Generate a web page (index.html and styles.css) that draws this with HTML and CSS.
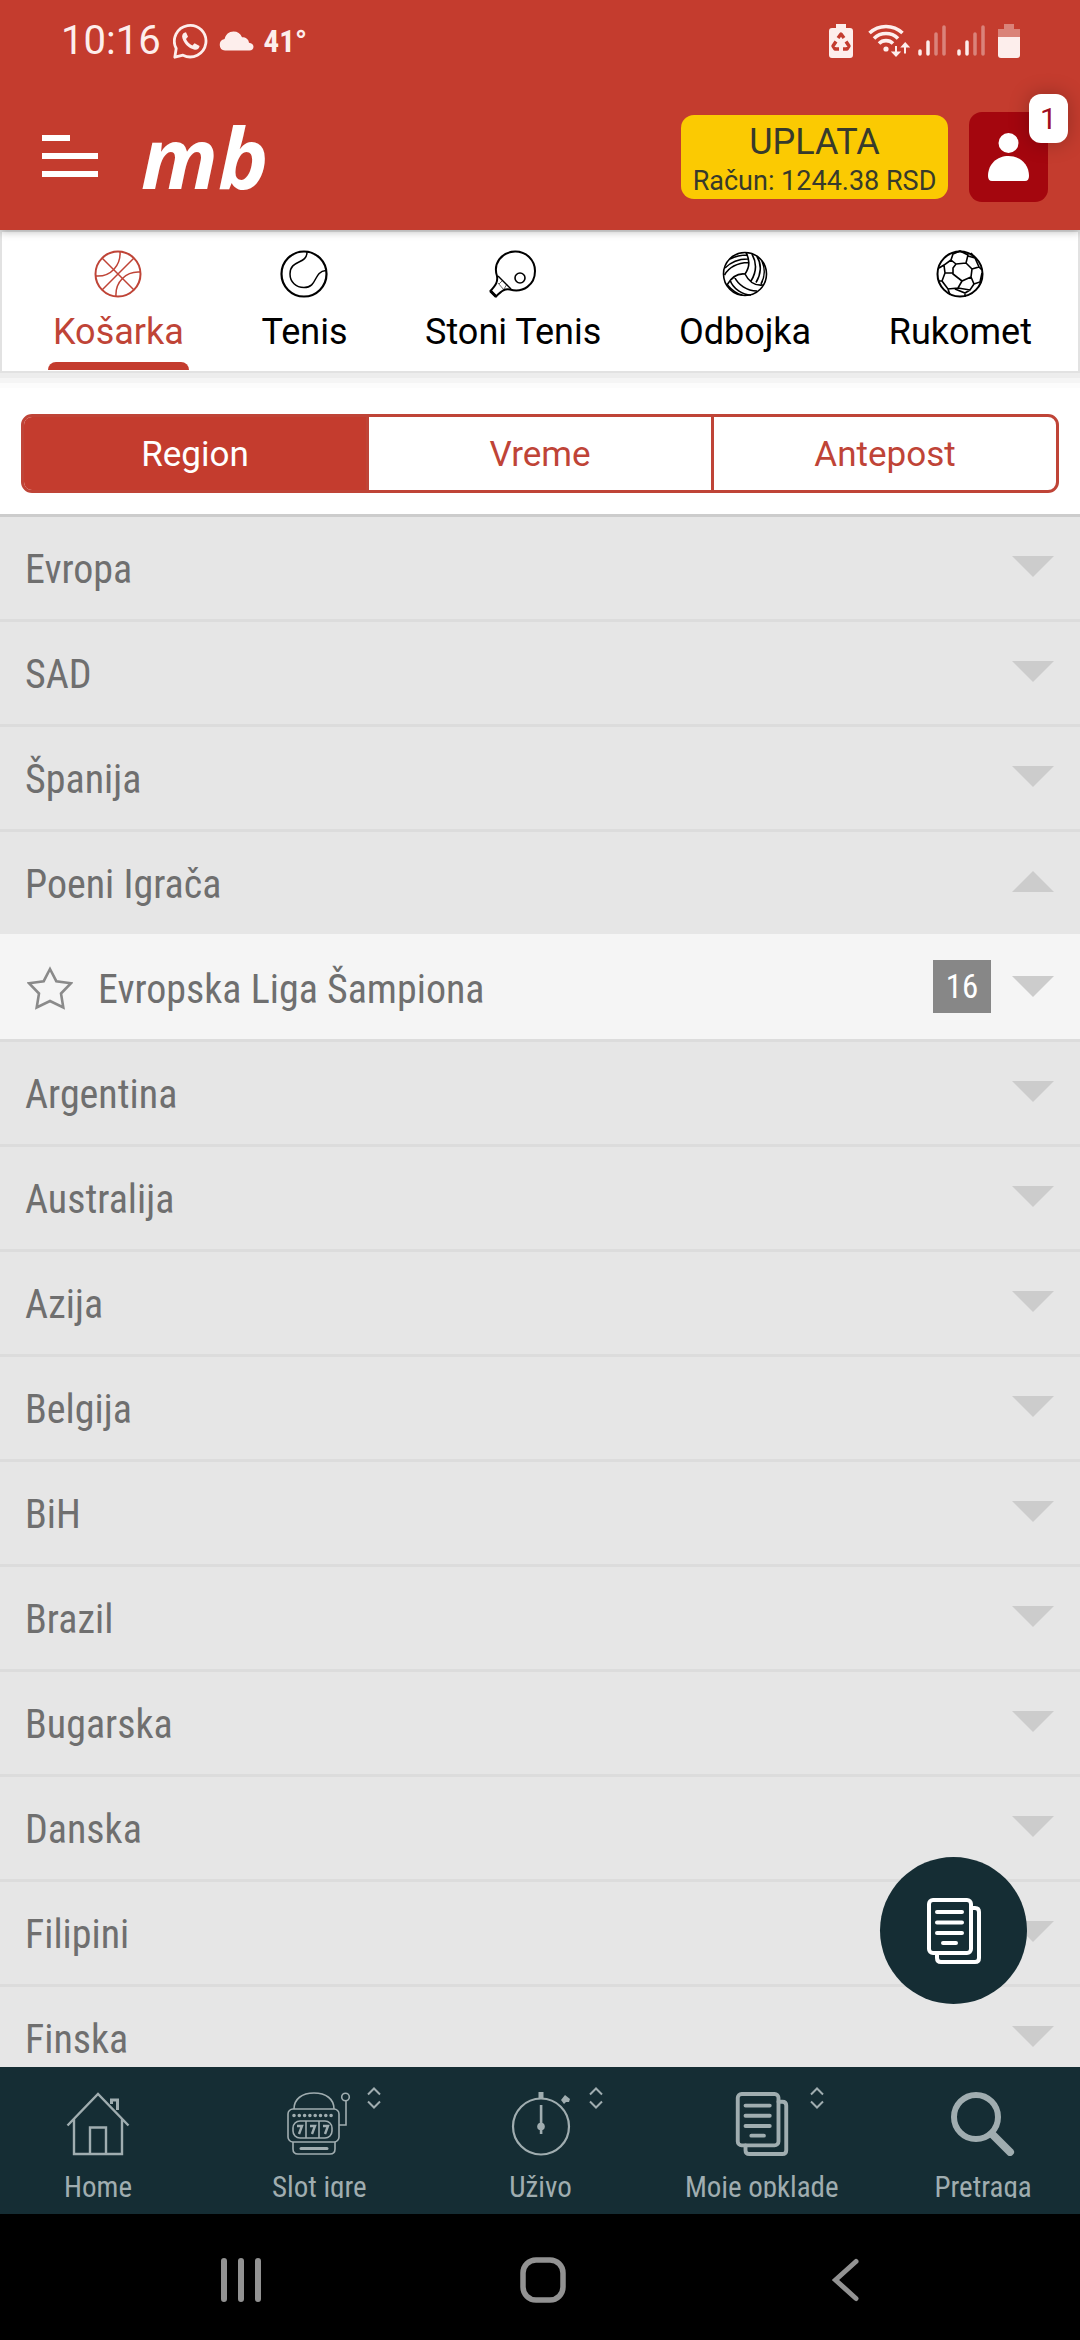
FILE: index.html
```html
<!DOCTYPE html>
<html lang="sr-Latn">
<head>
<meta charset="utf-8">
<meta name="viewport" content="width=device-width, initial-scale=1">
<title>Košarka</title>
<link rel="stylesheet" href="styles.css">
</head>
<body>
<svg class="defs" aria-hidden="true">
  <symbol id="down" viewBox="0 0 42 21"><path d="M0 0h42L21 21z" fill="currentColor"/></symbol>
  <symbol id="up" viewBox="0 0 42 21"><path d="M0 21h42L21 0z" fill="currentColor"/></symbol>
  <symbol id="sort" viewBox="0 0 14 22"><path d="M1 7.500L7 1.500l6 6M1 14.500l6 6 6-6" fill="none" stroke="currentColor" stroke-width="2"/></symbol>
  <symbol id="signal" viewBox="0 0 28 32"><g stroke="currentColor" stroke-width="3.500" stroke-linecap="round"><path d="M2 26v3M10 17v12"/><path d="M18 9v20M26 2v27" opacity=".4"/></g></symbol>
  <symbol id="slips" viewBox="0 0 54 66"><g fill="none" stroke="currentColor" stroke-width="4" stroke-linecap="round"><rect x="2" y="2" width="42" height="53" rx="4"/><path d="M44 10h4q4 0 4 4v46q0 4-4 4H14q-4 0-4-4v-5M10 14h25M10 24.500h25M10 35h25M16 45h13"/></g></symbol>
</svg>

<header class="header">
  <div class="status">
    <span class="clock">10:16</span>
    <svg width="36" height="36" viewBox="0 0 36 36"><path d="M3.200 25.500A15.800 15.800 0 1 1 10 32.200L1.800 34.200z" fill="none" stroke="currentColor" stroke-width="2.800" stroke-linejoin="round"/><path d="M12 9.500c-2.500.7-3.500 3-2.500 6 1.800 5.500 6 9.500 11.500 11 3 .8 5.200-.8 5.600-3.600l-5-2.700-2.200 2.200c-3-1.200-5.200-3.500-6.400-6.400l2-2.200-2-4.500z" fill="currentColor"/></svg>
    <svg class="cloud" width="35" height="20" viewBox="0 0 35 20"><path d="M6 19.500a5.800 5.800 0 0 1-.4-11.500C6.500 3.500 10 .5 14.500.5c4 0 7 2 8.500 5.800 4 0 6.500 2 7 5.400 2.600.3 4.500 1.600 4.500 4 0 2.300-1.600 3.800-4 3.800z" fill="currentColor"/></svg>
    <span class="temp">41°</span>
    <span class="status-right">
      <svg width="24" height="34" viewBox="0 0 24 34"><path d="M7 0h10v4h4q3 0 3 3v24q0 3-3 3H3q-3 0-3-3V7q0-3 3-3h4z" fill="currentColor"/><path d="M9 14l3-4 3 4M17 17.500l3 4.500-2 3h-4M10 25H6l-2-3 3-4.500" fill="none" stroke="#c33c2f" stroke-width="3.400" stroke-linejoin="round"/><path d="M12 15l3.500 5h-2v4h-3v-4h-2z" fill="#fdeeec"/></svg>
      <svg class="wifi" width="42" height="34" viewBox="0 0 42 34"><g fill="none" stroke="currentColor" stroke-width="3.600"><path d="M1.500 9a24 24 0 0 1 33 0M6 14.500a17 17 0 0 1 24 0M11 19.500a10 10 0 0 1 14 0"/></g><circle cx="18" cy="25" r="2.600" fill="currentColor"/><path d="M27 22v5.500h-4.200l5.200 5.500 5.200-5.500H29V22zM36 29.500v-6h-3.800l5-5.500 5 5.500H38v6z" fill="currentColor"/></svg>
      <svg width="28" height="32"><use href="#signal"/></svg>
      <svg class="signal-two" width="28" height="32"><use href="#signal"/></svg>
      <svg width="22" height="34" viewBox="0 0 22 34"><path d="M6 0h10v5h6v8H0V5h6z" fill="currentColor" opacity=".4"/><path d="M0 13h22v18q0 3-3 3H3q-3 0-3-3z" fill="currentColor"/></svg>
    </span>
  </div>
  <div class="topbar">
    <button class="menu" aria-label="Meni"><svg width="56" height="42" viewBox="0 0 56 42"><path d="M0 0h28v6H0zM0 18h56v6H0zM0 36h56v6H0z" fill="currentColor"/></svg></button>
    <a class="logo" href="#">mb</a>
    <button class="pay"><span class="pay-title">UPLATA</span><span class="pay-sum">Račun: 1244.38 RSD</span></button>
    <button class="user" aria-label="Nalog"><svg width="41" height="48" viewBox="0 0 41 48"><circle cx="20.500" cy="10" r="10" fill="currentColor"/><path d="M0 43C0 31 9 23 20.500 23S41 31 41 43q0 5-4 5H4q-4 0-4-5z" fill="currentColor"/></svg><span class="badge">1</span></button>
  </div>
</header>

<nav class="sports">
  <a class="sport active" href="#"><svg width="48" height="48" viewBox="0 0 48 48"><g fill="none" stroke="currentColor" stroke-width="1.500"><circle cx="24" cy="24" r="22.500" stroke-width="2"/><path d="M8 8l32 32M40 8L8 40M26 1.500C27 15 17 27 2 26M46 22C32 21 21 32 22 46.500"/></g></svg><span>Košarka</span></a>
  <a class="sport" href="#"><svg width="48" height="48" viewBox="0 0 48 48"><g fill="none" stroke="currentColor" stroke-width="1.500"><circle cx="24" cy="24" r="22.500" stroke-width="2.200"/><path d="M27 2C27 15 10 9 10 24c0 8 6 13.500 14 13.500 14 0 9-16 22-17"/></g></svg><span>Tenis</span></a>
  <a class="sport" href="#"><svg width="48" height="48" viewBox="0 0 48 48"><g fill="none" stroke="currentColor" stroke-width="2"><path d="M8 26C4 14 12 2 26 1.500A19.500 19.500 0 0 1 46 21C46 35 34 43 21 39.500c-5-1-8 1-14 7L1.500 41C7 34.500 9 32 8 26z"/><path d="M9 26l13 13" stroke-width="1.500"/><path d="M9 33l6 7M14 30l-4 4M18 34l-3 5" stroke-width=".6"/><circle cx="31" cy="28" r="5" stroke-width="1.600"/><path d="M1.500 41l5.500 5.500" stroke-width="3"/></g></svg><span>Stoni Tenis</span></a>
  <a class="sport" href="#"><svg width="48" height="48" viewBox="0 0 48 48"><g fill="none" stroke="currentColor" stroke-width="1.600"><circle cx="24" cy="24" r="21.500"/><path d="M24 24c5-7 5-14 1-21.500M31 4c5 9 4 19-1 27M36 6.500c5 8 4 18-1 26M41 11c3 7 3 16-1 23M24 24C16 23 10 28 6 35M3.500 25C8 17 16 13 27.500 12.500M4 18C11 11 18 9 26.500 9M9 9c6-3 10-4 17-4M24 24c4 8 10 12 18 11M13 26c4 9 13 15 23 15M9 30c3 9 13 15 21 15M6.500 35c5 6 9 9 15 10"/></g></svg><span>Odbojka</span></a>
  <a class="sport" href="#"><svg width="48" height="48" viewBox="0 0 48 48"><g fill="none" stroke="currentColor" stroke-width="1.600"><circle cx="24" cy="24" r="22.500" stroke-width="2"/><path d="M20 14l10-1 6 6-1 8-9 4-9-7 0-6zM20 14l-5-4 2-6 7-3 8 4-2 8M15 10l-7 5 1 8 8 0M8 15l-5 3M9 23l-3 8 6 8 10-1 4-7M6 31l-4 0M36 19l7-2 3 3M43 17l-4-9-7-2M35 27l3 7 6-2 2-9M38 34l-4 6-12-2M34 40l-5 3-10-4M29 43v4M12 39l2 6M39 8l-4-5"/></g></svg><span>Rukomet</span></a>
</nav>

<section class="filters">
  <div class="segments">
    <button class="segment selected">Region</button>
    <button class="segment">Vreme</button>
    <button class="segment">Antepost</button>
  </div>
</section>

<main class="regions">
  <button class="row"><span>Evropa</span><svg class="arrow"><use href="#down"/></svg></button>
  <button class="row"><span>SAD</span><svg class="arrow"><use href="#down"/></svg></button>
  <button class="row"><span>Španija</span><svg class="arrow"><use href="#down"/></svg></button>
  <button class="row open" aria-expanded="true"><span>Poeni Igrača</span><svg class="arrow"><use href="#up"/></svg></button>
  <button class="row league"><svg class="star" viewBox="0 0 46 44"><path d="M23 3l6.300 12.200 14.700 2-10 10.300 2.300 14L23 35 9.700 41.500l2.300-14L2 17.200l14.700-2z" fill="none" stroke="currentColor" stroke-width="2.600"/></svg><span>Evropska Liga Šampiona</span><span class="count">16</span><svg class="arrow"><use href="#down"/></svg></button>
  <button class="row"><span>Argentina</span><svg class="arrow"><use href="#down"/></svg></button>
  <button class="row"><span>Australija</span><svg class="arrow"><use href="#down"/></svg></button>
  <button class="row"><span>Azija</span><svg class="arrow"><use href="#down"/></svg></button>
  <button class="row"><span>Belgija</span><svg class="arrow"><use href="#down"/></svg></button>
  <button class="row"><span>BiH</span><svg class="arrow"><use href="#down"/></svg></button>
  <button class="row"><span>Brazil</span><svg class="arrow"><use href="#down"/></svg></button>
  <button class="row"><span>Bugarska</span><svg class="arrow"><use href="#down"/></svg></button>
  <button class="row"><span>Danska</span><svg class="arrow"><use href="#down"/></svg></button>
  <button class="row"><span>Filipini</span><svg class="arrow"><use href="#down"/></svg></button>
  <button class="row"><span>Finska</span><svg class="arrow"><use href="#down"/></svg></button>
</main>

<footer class="bottom">
  <button class="fab" aria-label="Tiket"><svg width="54" height="66"><use href="#slips"/></svg></button>
  <nav class="tabs">
    <a class="tab" href="#"><svg width="64" height="64" viewBox="0 0 64 64"><g fill="none" stroke="currentColor" stroke-width="2.400"><path d="M1.500 33.500L32 2l30.500 31.500M8 27v35h48V27M24 62V35.500h16V62"/><path d="M45.500 12V8h6v10" stroke-width="3"/></g></svg><span>Home</span></a>
    <a class="tab" href="#"><svg width="64" height="64" viewBox="0 0 64 64"><g fill="none" stroke="currentColor" stroke-width="1.600"><rect x="1" y="17" width="51" height="33" rx="5"/><path d="M7 17C7 7 15 1 27 1s20 6 20 16M6 50v7q0 5 5 5h32q5 0 5-5v-7M52 33h7V9"/><rect x="6" y="29" width="39" height="17" rx="7"/><path d="M19 29v17M32 29v17"/><circle cx="58.500" cy="5" r="3.800"/><path d="M10 34h5l-3 8M23 34h5l-3 8M36 34h5l-3 8" stroke-width="2.400"/><path d="M14 56.500h26" stroke-width="3" stroke-linecap="round"/><path d="M7 23.500h38" stroke-width="3.600" stroke-linecap="round" stroke-dasharray="0 5.300"/></g></svg><span>Slot igre</span><svg class="sort"><use href="#sort"/></svg></a>
    <a class="tab" href="#"><svg width="64" height="64" viewBox="0 0 64 64"><circle cx="32" cy="34.500" r="28" fill="none" stroke="currentColor" stroke-width="2.200"/><path d="M29.500 0h5v7h-5zM30.800 13h2.600v29h-2.600zM52 8l4-5 5 4-1 3h-3l-2 2z" fill="currentColor"/><circle cx="32" cy="34.500" r="3.800" fill="currentColor"/></svg><span>Uživo</span><svg class="sort"><use href="#sort"/></svg></a>
    <a class="tab" href="#"><svg width="64" height="64"><use href="#slips"/></svg><span>Moje opklade</span><svg class="sort"><use href="#sort"/></svg></a>
    <a class="tab" href="#"><svg width="64" height="64" viewBox="0 0 64 64"><circle cx="25" cy="25" r="22" fill="none" stroke="currentColor" stroke-width="6"/><path d="M41 42l18 18" stroke="currentColor" stroke-width="8" stroke-linecap="round"/></svg><span>Pretraga</span></a>
  </nav>
  <div class="system">
    <button aria-label="Nedavno"><svg width="46" height="46" viewBox="0 0 46 46"><path d="M6 4v38M23 4v38M40 4v38" stroke="currentColor" stroke-width="6" stroke-linecap="round"/></svg></button>
    <button aria-label="Početna"><svg width="46" height="46" viewBox="0 0 46 46"><rect x="3" y="3" width="40" height="40" rx="13" fill="none" stroke="currentColor" stroke-width="5.500"/></svg></button>
    <button aria-label="Nazad"><svg width="46" height="46" viewBox="0 0 46 46"><path d="M34 4.500L13.500 23 34 41.500" fill="none" stroke="currentColor" stroke-width="5" stroke-linecap="round"/></svg></button>
  </div>
</footer>
</body>
</html>
```
FILE: styles.css
```css
* { box-sizing: border-box; }

body {
  margin: 0;
  height: 100vh;
  display: flex;
  flex-direction: column;
  background: #fff;
  font-family: Roboto, "Noto Sans", sans-serif;
  overflow: hidden;
}

button {
  margin: 0;
  padding: 0;
  border: 0;
  background: none;
  color: inherit;
  font: inherit;
}

a { color: inherit; text-decoration: none; }
svg { display: block; flex: none; }
.defs { position: absolute; width: 0; height: 0; }

/* Header */
.header {
  position: relative;
  z-index: 1;
  background: #c43c2e;
  color: #fff;
  box-shadow: 0 2px 8px rgba(0, 0, 0, .25);
}

.status {
  display: flex;
  align-items: center;
  height: 82px;
  padding: 0 60px 0 61px;
  color: #fdeeec;
}

.clock { margin-right: 12px; font-size: 40px; line-height: 44px; }
.cloud { margin: 0 10px; }
.temp { font: 700 31px "Roboto Condensed", sans-serif; }
.status-right { display: flex; align-items: center; margin-left: auto; }
.wifi { margin: 0 8px 0 15px; }
.signal-two { margin: 0 13px 0 11px; }

.topbar {
  display: flex;
  align-items: center;
  height: 148px;
  padding: 0 32px 0 42px;
}

.logo {
  margin: 0 auto 0 43px;
  font: italic 700 85px/100px "Open Sans", "Noto Sans", sans-serif;
}

.pay {
  display: flex;
  flex-direction: column;
  align-items: center;
  width: 267px;
  height: 84px;
  margin-top: 2px;
  padding-top: 6px;
  border-radius: 13px;
  background: #fbca02;
  color: #373a2c;
}

.pay-title { font-size: 36px; line-height: 42px; }
.pay-sum { font-size: 27px; line-height: 36px; }

.user {
  position: relative;
  display: flex;
  align-items: center;
  justify-content: center;
  width: 79px;
  height: 90px;
  margin: 2px 0 0 21px;
  border-radius: 13px;
  background: #a4060e;
}

.badge {
  position: absolute;
  top: -18px;
  right: -20px;
  width: 39px;
  border-radius: 12px;
  background: #fff;
  box-shadow: 0 0 20px rgba(0, 0, 0, .25);
  color: #a00c20;
  font-size: 30px;
  line-height: 49px;
}

/* Sport tabs */
.sports {
  display: flex;
  justify-content: space-between;
  height: 143px;
  padding: 18px 41px 0 46px;
  border: 2px solid #e2e2e2;
  box-shadow: 0 5px #ededed, 0 10px #f5f5f5, 0 15px #fcfcfc;
}

.sport {
  display: flex;
  flex-direction: column;
  align-items: center;
  gap: 2px;
  padding: 0 5px;
  font-size: 36px;
  line-height: 64px;
}

.sport.active { color: #bf4437; }

.sport.active::after {
  content: "";
  align-self: stretch;
  height: 8px;
  margin: -4px -5px 0;
  border-radius: 8px 8px 0 0;
  background: #c43c2e;
}

/* Region / time / outright switch */
.filters {
  padding: 41px 21px 21px;
  border-bottom: 3px solid #ccc;
}

.segments {
  display: flex;
  height: 79px;
  border: 3px solid #bf4437;
  border-radius: 11px;
  overflow: hidden;
}

.segment {
  flex: 1;
  padding-top: 2px;
  color: #bf4437;
  font-size: 35px;
}

.segment + .segment { border-left: 3px solid #bf4437; }
.segment.selected { background: #c43c2e; color: #fff; }

/* Region list */
.regions {
  flex: 1;
  min-height: 0;
  overflow: hidden;
  background: #e6e6e6;
  color: #6f6f6f;
  font-family: "Roboto Condensed", Roboto, sans-serif;
  font-size: 40px;
}

.row {
  display: flex;
  align-items: center;
  width: 100%;
  height: 105px;
  padding: 2px 26px 0 25px;
  border-bottom: 3px solid #dcdcdc;
  text-align: left;
}

.row.open { border-color: #f5f5f5; }
.row.league { background: #f5f5f5; }

.star {
  width: 46px;
  height: 44px;
  margin: 0 25px 2px 2px;
  color: #8a8a8a;
}

.arrow {
  width: 42px;
  height: 21px;
  margin: 0 0 5px auto;
  color: #ccc;
}

.count {
  width: 58px;
  margin: 0 21px 5px auto;
  background: #878787;
  color: #fff;
  font-size: 33px;
  line-height: 53px;
  text-align: center;
}

.count + .arrow { margin-left: 0; }

/* Bottom bar */
.bottom { position: relative; flex: none; }

.fab {
  position: absolute;
  right: 53px;
  bottom: 336px;
  display: flex;
  align-items: center;
  justify-content: center;
  width: 147px;
  height: 147px;
  border-radius: 50%;
  background: #152d34;
  color: #fff;
}

.tabs {
  display: flex;
  justify-content: space-between;
  height: 147px;
  padding: 25px 23px 0 24px;
  background: #152d34;
  color: #a0adb0;
}

.tab {
  position: relative;
  display: flex;
  flex-direction: column;
  align-items: center;
  gap: 14px;
  width: 148px;
  font: 29px/34px "Roboto Condensed", Roboto, sans-serif;
  white-space: nowrap;
}

/* Labels are one short line; descenders fall under the edge */
.tab span {
  height: 28px;
  overflow: hidden;
}

.sort {
  position: absolute;
  top: -5px;
  left: 122px;
  width: 14px;
  height: 22px;
}

.system {
  display: flex;
  justify-content: center;
  gap: 256px;
  padding: 43px 0 37px 5px;
  background: #000;
  color: #929292;
}
```
